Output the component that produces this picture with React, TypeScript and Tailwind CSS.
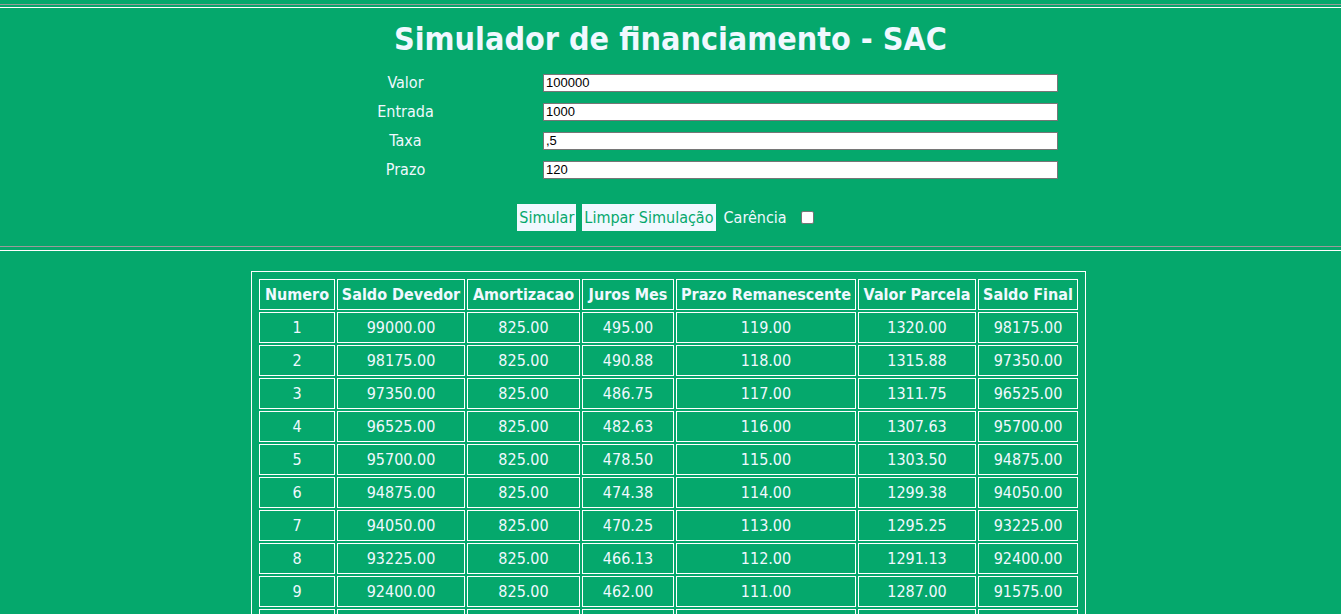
import React from "react";

const font = { fontFamily: '"DejaVu Sans Condensed", "DejaVu Sans", sans-serif' };

const headers = [
  { label: "Numero", w: "w-[76px]" },
  { label: "Saldo Devedor", w: "w-[128px]" },
  { label: "Amortizacao", w: "w-[113px]" },
  { label: "Juros Mes", w: "w-[92px]" },
  { label: "Prazo Remanescente", w: "w-[180px]" },
  { label: "Valor Parcela", w: "w-[118px]" },
  { label: "Saldo Final", w: "w-[100px]" },
];

const fmt = (n: number) => (Math.round(n * 100) / 100).toFixed(2);

// SAC: amortizacao fixa, juros sobre o saldo (taxa ,5% a.m.)
const buildRows = (count: number) => {
  const valor = 100000;
  const entrada = 1000;
  const prazo = 120;
  let saldo = valor - entrada;
  const amort = saldo / prazo;
  const rows = [];
  for (let i = 1; i <= count; i++) {
    const juros = (saldo * 5) / 1000;
    rows.push([
      String(i),
      fmt(saldo),
      fmt(amort),
      fmt(juros),
      fmt(prazo - i),
      fmt(amort + juros),
      fmt(saldo - amort),
    ]);
    saldo = saldo - amort;
  }
  return rows;
};

const Divider = ({ h }: { h: string }) => (
  <div className={`${h} w-full border-t border-b border-t-[#9a9a9a] border-b-white`} />
);

const fields = [
  { label: "Valor", value: "100000" },
  { label: "Entrada", value: "1000" },
  { label: "Taxa", value: ",5" },
  { label: "Prazo", value: "120" },
];

export default function App() {
  const rows = buildRows(10);

  return (
    <div className="min-h-screen bg-[#05a86c] text-[#f0f8ff]" style={font}>
      <div className="pt-[4px]">
        <Divider h="h-[4px]" />
      </div>

      <h1 className="mt-[11px] text-center text-[32px] font-bold leading-[40px]">
        Simulador de financiamento - SAC
      </h1>

      <div className="mx-auto mt-[9px] grid w-[790px] grid-cols-[260px_530px]">
        {fields.map((f) => (
          <React.Fragment key={f.label}>
            <div className="flex h-[29px] items-center justify-center text-[16px]">{f.label}</div>
            <div className="flex h-[29px] items-center justify-center">
              <input
                defaultValue={f.value}
                className="h-[18px] w-[515px] border border-[#767676] bg-white px-[2px] text-[13px] text-black outline-none"
                style={{ fontFamily: '"Liberation Sans", Arial, sans-serif' }}
              />
            </div>
          </React.Fragment>
        ))}
      </div>

      <div className="mt-[20px] flex items-center justify-center gap-[6px] pr-[10px]">
        <button className="h-[27px] bg-[#f0f8ff] px-[2px] text-[16px] text-[#05a86c]">Simular</button>
        <button className="h-[27px] bg-[#f0f8ff] px-[2px] text-[16px] text-[#05a86c]">
          Limpar Simulação
        </button>
        <span className="ml-[2px] text-[16px]">Carência</span>
        <input
          type="checkbox"
          className="ml-[8px] h-[13px] w-[13px] appearance-none rounded-[2px] border border-[#767676] bg-white"
        />
      </div>

      <div className="mt-[15px]">
        <Divider h="h-[5px]" />
      </div>

      <div className="mt-[20px] flex justify-center pr-[4px] pb-[20px]">
        <table className="border-separate border-spacing-[2px] border border-white p-[5px] text-[16px]">
          <thead>
            <tr>
              {headers.map((h) => (
                <th key={h.label} className={`${h.w} h-[31px] border border-white px-[2px] text-center font-bold`}>
                  {h.label}
                </th>
              ))}
            </tr>
          </thead>
          <tbody>
            {rows.map((r) => (
              <tr key={r[0]}>
                {r.map((c, i) => (
                  <td key={i} className="h-[31px] border border-white px-[2px] text-center">
                    {c}
                  </td>
                ))}
              </tr>
            ))}
          </tbody>
        </table>
      </div>
    </div>
  );
}
